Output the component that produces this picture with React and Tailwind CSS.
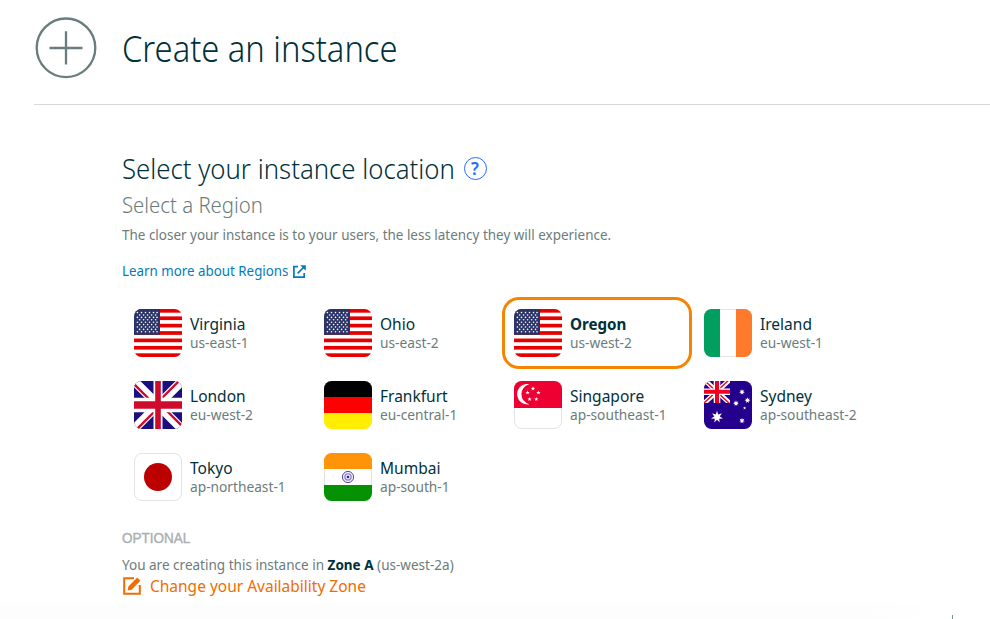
import { useId } from "react";

const US_ROWS = [3.6, 6, 8.4, 10.8, 13.2, 15.6, 18, 20.4, 22.8];

function star(cx, cy, r, points = 5, inner = 0.4) {
  return Array.from({ length: points * 2 }, (_, i) => {
    const rad = i % 2 ? r * inner : r;
    const a = (Math.PI * i) / points - Math.PI / 2;
    return `${(cx + rad * Math.cos(a)).toFixed(2)},${(cy + rad * Math.sin(a)).toFixed(2)}`;
  }).join(" ");
}

function UsFlag() {
  return (
    <>
      <rect width="48" height="48" fill="#fff" />
      {[0, 1, 2, 3, 4, 5, 6].map((i) => (
        <rect key={i} y={(i * 96) / 13} width="48" height={48 / 13} fill="#e60000" />
      ))}
      <rect width="26" height="25.85" fill="#2b3467" />
      {US_ROWS.map((y, r) =>
        (r % 2 ? [5.6, 9.6, 13.6, 17.6, 21.6] : [3.4, 7.5, 11.5, 15.5, 19.5, 23]).map((x) => (
          <circle key={x + "-" + y} cx={x} cy={y} r="0.82" fill="#fff" />
        ))
      )}
    </>
  );
}

function UkFlag() {
  return (
    <>
      <rect width="48" height="48" fill="#1b0f80" />
      <path d="M0 0L48 48M48 0L0 48" stroke="#fff" strokeWidth="9" />
      <path d="M-1.5 1.5L22.5 25.5M49.5 46.5L25.5 22.5M46.5 -1.5L24 21M1.5 49.5L24 27" stroke="#cf0a2c" strokeWidth="2.4" />
      <path d="M24 0V48" stroke="#fff" strokeWidth="9" />
      <path d="M0 24H48" stroke="#fff" strokeWidth="14.4" />
      <path d="M24 0V48" stroke="#cf0a2c" strokeWidth="5.6" />
      <path d="M0 24H48" stroke="#cf0a2c" strokeWidth="7.6" />
    </>
  );
}

function AuFlag() {
  return (
    <>
      <rect width="48" height="48" fill="#24008c" />
      <svg width="26" height="22" viewBox="0 0 26 22">
        <path d="M0 -1.5L26 22.5M26 -1.5L0 22.5" stroke="#fff" strokeWidth="4.6" />
        <path d="M0 -1L26 23M26 -2L0 22" stroke="#f00020" strokeWidth="1.4" />
        <path d="M13 0V22M0 10.7H26" stroke="#fff" strokeWidth="6.6" />
        <path d="M13 0V22M0 10.7H26" stroke="#f00020" strokeWidth="4" />
      </svg>
      <polygon points={star(13, 36, 6.2, 7, 0.45)} fill="#fff" />
      <polygon points={star(38, 11, 3, 7, 0.45)} fill="#fff" />
      <polygon points={star(43.5, 19.3, 3, 7, 0.45)} fill="#fff" />
      <polygon points={star(32, 22.3, 3, 7, 0.45)} fill="#fff" />
      <polygon points={star(38, 39.7, 3, 7, 0.45)} fill="#fff" />
      <polygon points={star(40.6, 27, 1.7, 5)} fill="#fff" />
    </>
  );
}

function SgFlag() {
  return (
    <>
      <rect width="48" height="48" fill="#fff" />
      <rect width="48" height="27" fill="#ee0132" />
      <path d="M15.3 3.2A10.2 10.2 0 1 0 15.3 23.2A10.3 10.3 0 0 1 15.3 3.2Z" fill="#fff" />
      {[[19, 7.6], [13.6, 11.7], [24.4, 11.7], [15.6, 18.2], [22.3, 18.2]].map(([x, y]) => (
        <polygon key={x} points={star(x, y, 2.3)} fill="#fff" />
      ))}
    </>
  );
}

function Bands({ colors, vertical }) {
  return colors.map((c, i) =>
    vertical ? (
      <rect key={c} x={i * 16} width="16" height="48" fill={c} />
    ) : (
      <rect key={c} y={i * 16} width="48" height="16" fill={c} />
    )
  );
}

function InFlag() {
  return (
    <>
      <Bands colors={["#ff9408", "#ffffff", "#049104"]} />
      <circle cx="24" cy="24" r="5.6" fill="#f1eff9" stroke="#5b45a8" strokeWidth="1" />
      <circle cx="24" cy="24" r="3.1" fill="none" stroke="#9488cc" strokeWidth="1.3" />
      <circle cx="24" cy="24" r="1.3" fill="#3a1f99" />
    </>
  );
}

function JpFlag() {
  return (
    <>
      <rect width="48" height="48" fill="#fff" />
      <circle cx="24" cy="24" r="14" fill="#bc0000" />
    </>
  );
}

const FLAGS = {
  us: <UsFlag />,
  uk: <UkFlag />,
  au: <AuFlag />,
  sg: <SgFlag />,
  de: <Bands colors={["#000000", "#ff0000", "#ffee00"]} />,
  ie: <Bands vertical colors={["#009f60", "#ffffff", "#ff7a2b"]} />,
  in: <InFlag />,
  jp: <JpFlag />,
};

const OUTLINE = {
  jp: "M8 .5H40A7.5 7.5 0 0 1 47.5 8V40A7.5 7.5 0 0 1 40 47.5H8A7.5 7.5 0 0 1 .5 40V8A7.5 7.5 0 0 1 8 .5Z",
  sg: "M.5 27V40A7.5 7.5 0 0 0 8 47.5H40A7.5 7.5 0 0 0 47.5 40V27",
  ie: "M16 .5H32M16 47.5H32",
  in: "M.5 16V32M47.5 16V32",
};

function Flag({ code }) {
  const id = useId();
  return (
    <svg className="size-12 shrink-0" viewBox="0 0 48 48">
      <clipPath id={id}>
        <rect width="48" height="48" rx="7.5" />
      </clipPath>
      <g clipPath={`url(#${id})`}>{FLAGS[code]}</g>
      {OUTLINE[code] && <path d={OUTLINE[code]} fill="none" stroke="#e1e4e4" />}
    </svg>
  );
}

const REGIONS = [
  ["us", "Virginia", "us-east-1"],
  ["us", "Ohio", "us-east-2"],
  ["us", "Oregon", "us-west-2"],
  ["ie", "Ireland", "eu-west-1"],
  ["uk", "London", "eu-west-2"],
  ["de", "Frankfurt", "eu-central-1"],
  ["sg", "Singapore", "ap-southeast-1"],
  ["au", "Sydney", "ap-southeast-2"],
  ["jp", "Tokyo", "ap-northeast-1"],
  ["in", "Mumbai", "ap-south-1"],
];

function Region({ code, name, zone, selected }) {
  return (
    <button
      className={
        "flex h-[72px] w-[190px] gap-[7.5px] rounded-[17px] border-3 p-[9px] text-left whitespace-nowrap " +
        (selected ? "border-[#f58400]" : "border-transparent")
      }
    >
      <Flag code={code} />
      <span className="flex flex-col pt-[5px]">
        <span
          className={
            "origin-left text-base leading-5 text-[#00313a] " +
            (selected ? "scale-x-[0.948] font-bold" : "scale-x-[0.97]")
          }
        >
          {name}
        </span>
        <span className="origin-left scale-x-[0.98] text-sm leading-[18px] text-[#6b7c7c]">{zone}</span>
      </span>
    </button>
  );
}

export default function App() {
  return (
    <div className="flex h-[619px] w-[990px] flex-col overflow-hidden bg-white font-['Noto_Sans',sans-serif] text-[#6b7c7c]">
      <header className="ml-[34px] flex h-[105px] shrink-0 gap-[25px] border-b border-[#d5d9d9] pt-[17px] pl-px">
        <svg className="size-[62px]" viewBox="0 0 62 62" fill="none" stroke="#6b7c7c" strokeWidth="2.3">
          <circle cx="31" cy="30.8" r="29.3" />
          <path d="M14.5 31H47.5M31 14.2V47.5" />
        </svg>
        <h1 className="origin-left scale-x-[0.908] text-4xl leading-[63px] font-light whitespace-nowrap text-[#00313a]">
          Create an instance
        </h1>
      </header>

      <main className="ml-[122px] flex h-[498px] shrink-0 flex-col whitespace-nowrap">
        <div className="mt-[45px] flex h-9 items-center">
          <h2 className="w-[341.5px] text-[28px] leading-9 font-light text-[#00313a]">
            <span className="inline-block origin-left scale-x-[0.92]">Select your instance location</span>
          </h2>
          <span className="mt-px flex size-[23px] items-center justify-center rounded-full border border-[#2b66ff] text-[17px] leading-none font-semibold text-[#2b66ff]">
            ?
          </span>
        </div>
        <h3 className="mt-[3px] w-fit origin-left scale-x-[0.925] text-[22px] leading-[30px] font-light">Select a Region</h3>
        <p className="mt-1.5 w-fit origin-left scale-x-[0.961] text-sm leading-5">
          The closer your instance is to your users, the less latency they will experience.
        </p>
        <a className="mt-4 flex h-5 items-center text-[#007dbc]">
          <span className="w-[171px] text-sm leading-5">
            <span className="inline-block origin-left scale-x-[0.953]">Learn more about Regions</span>
          </span>
          <svg className="size-[13px]" viewBox="0 0 13 13" fill="none" stroke="currentColor" strokeWidth="1.7">
            <path d="M5 1.6H.9V12.1H11.2V8M4.6 8.4L11 2" />
            <path d="M7.2 .2H12.8V5.8Z" fill="currentColor" stroke="none" />
          </svg>
        </a>

        <div className="mt-4 grid w-[760px] grid-cols-4">
          {REGIONS.map(([code, name, zone]) => (
            <Region key={name} code={code} name={name} zone={zone} selected={name === "Oregon"} />
          ))}
        </div>

        <div className="mt-[15px] font-['Liberation_Sans',sans-serif] text-sm leading-5 text-[#aab0b0]">
          <span className="inline-block origin-left scale-x-[0.965] [-webkit-text-stroke:0.4px_#aab0b0]">OPTIONAL</span>
        </div>
        <p className="mt-[7px] w-fit origin-left scale-x-[0.966] text-sm leading-5">
          You are creating this instance in <b className="font-bold text-[#00313a]">Zone A</b> (us-west-2a)
        </p>
        <a className="flex h-[22px] items-center gap-[9px] pl-px text-[#f26b00]">
          <svg className="size-[18px]" viewBox="0 0 18 18" fill="none" stroke="currentColor" strokeWidth="2">
            <path d="M11 1.2H1.2V16.8H16.8V8" />
            <path d="M4.6 13.6L5.4 9.6L14.2 .6L17.4 3.8L8.6 12.8Z" fill="currentColor" stroke="none" />
          </svg>
          <span className="origin-left scale-x-[0.968] text-base leading-[22px]">Change your Availability Zone</span>
        </a>
      </main>

      <footer className="flex h-4 items-end bg-linear-to-r from-[#fdfdfd] from-85% to-white to-97%">
        <span className="ml-[952px] h-1 w-px bg-[#7f9090]" />
      </footer>
    </div>
  );
}
